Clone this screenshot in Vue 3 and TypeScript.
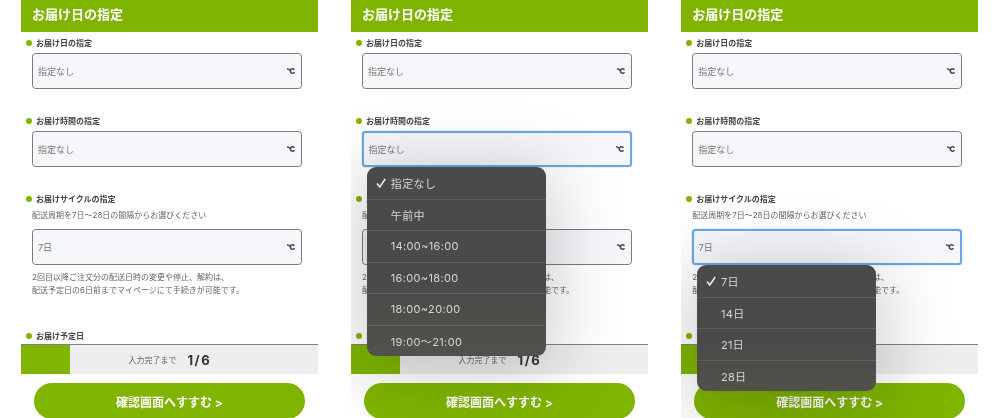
<script setup lang="ts">
interface Panel {
  focus: 'none' | 'time' | 'cycle'
}

const panels: Panel[] = [{ focus: 'none' }, { focus: 'time' }, { focus: 'cycle' }]
const timeOptions = ['指定なし', '午前中', '14:00~16:00', '16:00~18:00', '18:00~20:00', '19:00～21:00']
const cycleOptions = ['7日', '14日', '21日', '28日']
</script>

<template>
  <main class="page">
    <section v-for="(panel, index) in panels" :key="index" class="panel">
      <h1 class="title">お届け日の指定</h1>

      <div class="form">
        <div class="group">
          <div class="label">お届け日の指定</div>
          <div class="field-wrap">
            <div class="field">
              <span>指定なし</span>
              <svg class="icon" viewBox="0 0 10 8" aria-hidden="true">
                <path d="M1 1.6 L4 3" />
                <path d="M8.4 2.9 A2.2 2.2 0 1 0 8.4 5.1" />
              </svg>
            </div>
          </div>
        </div>

        <div class="group">
          <div class="label">お届け時間の指定</div>
          <div class="field-wrap">
            <div class="field" :class="{ focused: panel.focus === 'time' }">
              <span>指定なし</span>
              <svg class="icon" viewBox="0 0 10 8" aria-hidden="true">
                <path d="M1 1.6 L4 3" />
                <path d="M8.4 2.9 A2.2 2.2 0 1 0 8.4 5.1" />
              </svg>
            </div>
            <ul v-if="panel.focus === 'time'" class="menu">
              <li v-for="(option, i) in timeOptions" :key="option" class="option">
                <span class="check">
                  <svg v-if="i === 0" class="check-mark" viewBox="0 0 10 10" aria-hidden="true">
                    <path d="M1 5.6 L3.8 9 L9.2 1" />
                  </svg>
                </span>{{ option }}
              </li>
            </ul>
          </div>
        </div>

        <div class="group cycle">
          <div class="label">お届けサイクルの指定</div>
          <p class="note">配送周期を7日〜28日の間隔からお選びください</p>
          <div class="field-wrap">
            <div class="field" :class="{ focused: panel.focus === 'cycle' }">
              <span>7日</span>
              <svg class="icon" viewBox="0 0 10 8" aria-hidden="true">
                <path d="M1 1.6 L4 3" />
                <path d="M8.4 2.9 A2.2 2.2 0 1 0 8.4 5.1" />
              </svg>
            </div>
            <ul v-if="panel.focus === 'cycle'" class="menu">
              <li v-for="(option, i) in cycleOptions" :key="option" class="option">
                <span class="check">
                  <svg v-if="i === 0" class="check-mark" viewBox="0 0 10 10" aria-hidden="true">
                    <path d="M1 5.6 L3.8 9 L9.2 1" />
                  </svg>
                </span>{{ option }}
              </li>
            </ul>
          </div>
          <p class="help">2回目以降ご注文分の配送日時の変更や停止、解約は、<br />配送予定日の6日前までマイページにて手続きが可能です。</p>
        </div>

        <div class="label last">お届け予定日</div>
      </div>

      <div class="progress">
        <div class="progress-fill"></div>
        <div class="progress-text">
          <span class="progress-label">入力完了まで</span>
          <strong class="progress-count">1/6</strong>
        </div>
      </div>

      <button class="next" type="button">確認画面へすすむ &gt;</button>
    </section>
  </main>
</template>

<style>
html,
body {
  margin: 0;
  background: #fff;
}
</style>

<style scoped>
.page {
  width: 1000px;
  height: 418px;
  box-sizing: border-box;
  padding-left: 21px;
  display: flex;
  gap: 33.5px;
  overflow: hidden;
  background: #fff;
  font-family: "Inter", "Noto Sans CJK JP", "Noto Sans", sans-serif;
}

.panel {
  position: relative;
  width: 296.6px;
  height: 418px;
  flex: none;
  overflow: hidden;
  display: flex;
  flex-direction: column;
  filter: blur(0.3px);
}

.panel > * {
  flex: none;
}

.title {
  margin: 0;
  height: 32px;
  padding-left: 11px;
  background: #7fb500;
  color: #fff;
  font-size: 13px;
  font-weight: 700;
  line-height: 29px;
}

.form {
  padding: 5px 0 0 5px;
}

.group {
  height: 78px;
}

.group.cycle {
  height: 137px;
}

.label {
  position: relative;
  height: 12px;
  padding-left: 10px;
  margin-bottom: 4px;
  color: #444;
  font-size: 8px;
  font-weight: 700;
  line-height: 12px;
}

.label::before {
  content: "";
  position: absolute;
  left: 0;
  top: 3px;
  width: 6px;
  height: 6px;
  border-radius: 50%;
  background: #7fb500;
}

.label.last {
  margin-bottom: 2px;
}

.field-wrap {
  position: relative;
  width: 269.5px;
  margin-left: 6px;
}

.field {
  height: 36px;
  box-sizing: border-box;
  padding: 0 4.5px 0 5px;
  display: flex;
  align-items: center;
  justify-content: space-between;
  border: 1.3px solid #7b7b7b;
  border-radius: 3.5px;
  background: #f6f7fa;
  color: #777;
  font-size: 9px;
}

.field.focused {
  border: 2px solid #6ba6e2;
  box-shadow: 0 0 2px #a9cdf0;
  padding-left: 4.5px;
}

.icon {
  width: 10px;
  height: 8px;
  fill: none;
  stroke: #4d4d4d;
  stroke-width: 1.6;
}

.menu {
  position: absolute;
  z-index: 2;
  left: 5.2px;
  top: 100%;
  width: 178.5px;
  margin: 0;
  padding: 0;
  list-style: none;
  border-radius: 9px;
  background: linear-gradient(#4a4a4a 60%, #50524a);
  box-shadow: 0 10px 70px 10px rgba(0, 0, 0, 0.19);
  overflow: hidden;
}

.option {
  height: 31.5px;
  box-sizing: border-box;
  display: flex;
  align-items: center;
  color: #d6d6d6;
  font-size: 11px;
  letter-spacing: 0.35px;
  border-top: 1px solid rgba(255, 255, 255, 0.11);
}

.option:first-child {
  border-top: 0;
}

.check {
  width: 23.5px;
  padding-left: 8.5px;
  box-sizing: border-box;
  flex: none;
  display: flex;
  align-items: center;
}

.check-mark {
  width: 10px;
  height: 10px;
  fill: none;
  stroke: #f0f0f0;
  stroke-width: 1.5;
}

.note {
  margin: 4px 0 7px 6px;
  color: #666;
  font-size: 8px;
  line-height: 13px;
}

.help {
  margin: 6px 0 0 6px;
  color: #666;
  font-size: 8px;
  line-height: 13px;
}

.progress {
  height: 30px;
  box-sizing: border-box;
  display: flex;
  border-top: 1px solid #808080;
  background: #eeeeee;
}

.progress-fill {
  width: 49px;
  flex: none;
  background: #7fb500;
}

.progress-text {
  flex: 1;
  display: flex;
  align-items: center;
  justify-content: center;
  gap: 11px;
  padding-right: 48px;
}

.progress-label {
  color: #666;
  font-size: 8px;
}

.progress-count {
  color: #333;
  font-size: 13px;
  font-weight: 700;
  letter-spacing: 1.5px;
}

.next {
  display: block;
  width: 271px;
  height: 36px;
  margin: 9px 0 0 13px;
  padding: 0;
  border: 0;
  border-radius: 18px;
  background: #7fb500;
  color: #fff;
  font-family: inherit;
  font-size: 12px;
  font-weight: 700;
  text-align: center;
}
</style>
